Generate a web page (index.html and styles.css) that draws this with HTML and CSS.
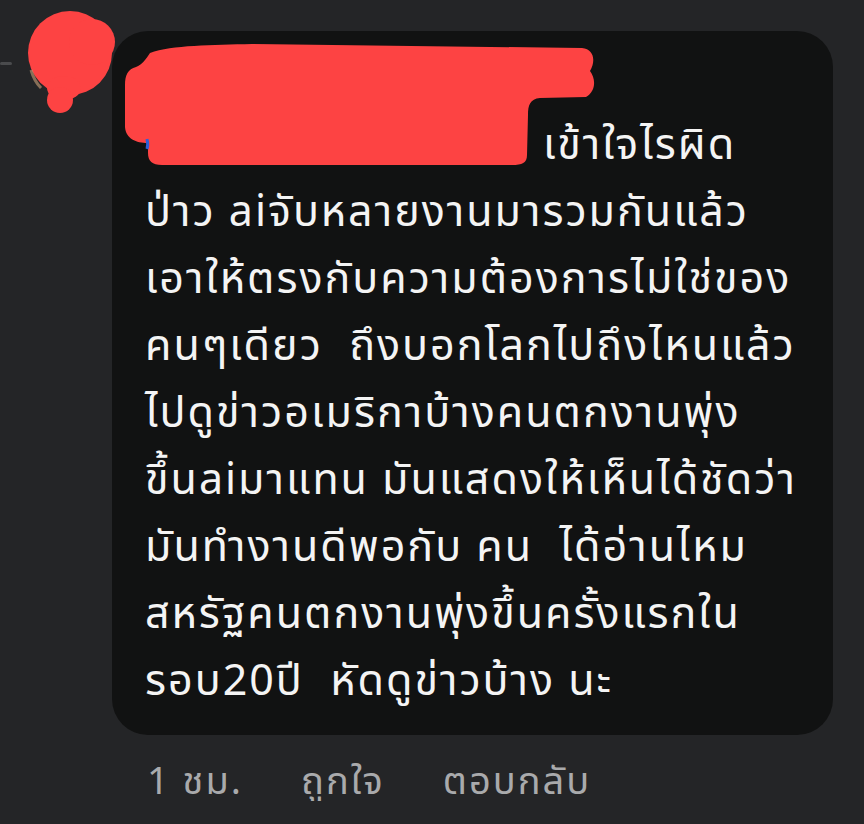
FILE: index.html
```html
<!DOCTYPE html>
<html lang="th">
<head>
  <meta charset="UTF-8" />
  <title>ความคิดเห็น</title>
  <meta name="viewport" content="width=device-width, initial-scale=1" />
  <link rel="stylesheet" href="styles.css">
</head>
<body>
  <div class="thread-stub"></div>

  <div class="comment">
    <div class="avatar">
      <!-- ขีดทับรูปโปรไฟล์ -->
      <svg class="scribble" width="130" height="130" viewBox="0 0 130 130">
        <g fill="#fd4343">
          <circle cx="70" cy="53" r="42"/>
          <circle cx="92" cy="42" r="23"/>
          <ellipse cx="64" cy="88" rx="17" ry="12"/>
          <circle cx="60" cy="100" r="13"/>
        </g>
        <path d="M31 70c2 7 5 13 10 18" stroke="#c9a27a" stroke-width="3" fill="none" opacity="0.6"/>
      </svg>
    </div>

    <div class="body">
      <div class="bubble">
        <!-- ขีดทับชื่อ -->
        <svg class="scribble name-mark" width="500" height="150" viewBox="0 0 500 150">
          <path d="M38 22C60 14 100 14 140 13L470 17C482 18 484 30 478 40C484 48 484 60 474 66L428 67C418 68 416 74 416 84L415 124C415 132 410 134 400 134L50 134C40 134 36 130 36 122L36 112C24 112 14 108 13 96L13 54C13 44 16 38 24 36C30 34 34 28 38 22Z" fill="#fd4343"/>
          <path d="M35 108c1 4 1 7 0 10" stroke="#2f5fd8" stroke-width="3" fill="none"/>
        </svg>

        <div class="name-line"></div>
        <div class="text">
          <span class="tag"></span>เข้าใจไรผิด<br>
          ป่าว aiจับหลายงานมารวมกันแล้ว<br>
          เอาให้ตรงกับความต้องการไม่ใช่ของ<br>
          คนๆเดียว&nbsp; ถึงบอกโลกไปถึงไหนแล้ว<br>
          ไปดูข่าวอเมริกาบ้างคนตกงานพุ่ง<br>
          ขึ้นaiมาแทน มันแสดงให้เห็นได้ชัดว่า<br>
          มันทำงานดีพอกับ คน&nbsp; ได้อ่านไหม<br>
          สหรัฐคนตกงานพุ่งขึ้นครั้งแรกใน<br>
          รอบ20ปี&nbsp; หัดดูข่าวบ้าง นะ
        </div>
      </div>

      <div class="actions">
        <span>1 ชม.</span>
        <span>ถูกใจ</span>
        <span>ตอบกลับ</span>
      </div>
    </div>
  </div>
</body>
</html>
```

FILE: styles.css
```css
body {
  font-family: 'Noto Sans', 'Noto Sans Thai', sans-serif;
  background: #242527;
  margin: 0;
  color: #f4f4f4;
  overflow: hidden;
}
.thread-stub {
  position: absolute;
  left: 0;
  top: 62px;
  width: 12px;
  height: 3px;
  border-radius: 2px;
  background: #4a4b4d;
}
.comment {
  display: flex;
  padding: 31px 31px 0 24px;
}
.avatar {
  position: relative;
  width: 88px;
  flex-shrink: 0;
}
.scribble {
  position: absolute;
}
.avatar .scribble {
  left: -24px;
  top: -31px;
}
.body {
  flex: 1;
}
.bubble {
  position: relative;
  background: #111212;
  border-radius: 36px;
  padding: 0 20px 23px 33px;
}
.name-mark {
  left: 0;
  top: 0;
}
.name-line {
  height: 78px;
}
.text {
  font-size: 43px;
  line-height: 67px;
  letter-spacing: 2px;
  white-space: nowrap;
}
.tag {
  display: inline-block;
  width: 398px;
}
.actions {
  display: flex;
  gap: 58px;
  padding: 22px 0 0 35px;
  font-size: 38px;
  line-height: 44px;
  letter-spacing: 2px;
  color: #a9aaac;
}
```
